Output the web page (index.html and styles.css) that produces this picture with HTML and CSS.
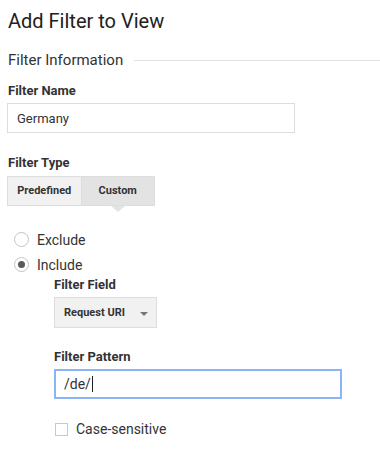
FILE: index.html
```html
<!DOCTYPE html>
<html>
	<head>
		<meta charset="UTF-8" />
		<title>Add Filter to View</title>
		<link rel="stylesheet" href="styles.css">
	</head>
	<body>
		<div class="page">
			<h1 class="title">Add Filter to View</h1>
			<div class="section-head">
				<span>Filter Information</span>
				<div class="rule"></div>
			</div>

			<label class="field-label">Filter Name</label>
			<input class="text-input name-input" type="text" value="Germany" />

			<label class="field-label type-label">Filter Type</label>
			<div class="toggle">
				<span class="toggle-btn">Predefined</span>
				<span class="toggle-btn active">Custom</span>
			</div>

			<div class="radios">
				<div class="radio-row">
					<span class="radio"></span>
					<span>Exclude</span>
				</div>
				<div class="radio-row">
					<span class="radio checked"></span>
					<span>Include</span>
				</div>
			</div>

			<div class="sub">
				<label class="field-label">Filter Field</label>
				<div class="dropdown">
					<span>Request URI</span>
					<span class="caret"></span>
				</div>

				<label class="field-label pattern-label">Filter Pattern</label>
				<div class="text-input pattern-input">/de/<span class="cursor"></span></div>

				<div class="check-row">
					<span class="checkbox"></span>
					<span>Case-sensitive</span>
				</div>
			</div>
		</div>
	</body>
</html>
```

FILE: styles.css
```css
* {
	margin: 0;
	padding: 0;
	box-sizing: border-box;
}
body {
	font-family: Roboto, "Liberation Sans", sans-serif;
	color: #222;
	background: #fff;
}
.page {
	padding: 9px 0 0 8px;
}
.title {
	font-size: 20px;
	font-weight: 400;
	line-height: 24px;
	color: #212121;
}
.section-head {
	display: flex;
	align-items: center;
	gap: 11px;
	margin-top: 18px;
	font-size: 15px;
	line-height: 18px;
	color: #333;
}
.section-head .rule {
	flex: 1;
	height: 1px;
	background: #e0e0e0;
	margin-top: 1px;
}
.field-label {
	display: block;
	font-size: 13px;
	font-weight: 700;
	line-height: 16px;
	color: #333;
	margin-top: 14px;
}
.text-input {
	display: block;
	font-family: inherit;
	font-size: 13px;
	color: #333;
	border: 1px solid #ddd;
	background: #fff;
	outline: none;
}
.name-input {
	width: 288px;
	height: 30px;
	margin: 4px 0 0 -1px;
	padding: 0 9px;
}
.type-label {
	margin-top: 22px;
}
.toggle {
	display: flex;
	width: 148px;
	margin: 5px 0 0 -1px;
	border: 1px solid #ddd;
	position: relative;
}
.toggle-btn {
	flex: 1;
	height: 28px;
	line-height: 28px;
	text-align: center;
	font-size: 11px;
	font-weight: 700;
	color: #333;
	background: #f1f1f1;
}
.toggle-btn + .toggle-btn {
	border-left: 1px solid #ddd;
}
.toggle-btn.active {
	background: #e3e3e3;
	position: relative;
}
.toggle-btn.active:after {
	content: '';
	position: absolute;
	left: 50%;
	bottom: -7px;
	margin-left: -7px;
	border-left: 7px solid transparent;
	border-right: 7px solid transparent;
	border-top: 6px solid #e3e3e3;
}
.radios {
	margin-top: 21px;
	padding-left: 6px;
}
.radio-row {
	display: flex;
	align-items: center;
	gap: 8px;
	height: 25px;
	font-size: 14px;
	color: #333;
}
.radio {
	width: 15px;
	height: 15px;
	border: 1px solid #c4c4c4;
	border-radius: 50%;
	display: flex;
	align-items: center;
	justify-content: center;
}
.radio.checked:after {
	content: '';
	width: 7px;
	height: 7px;
	border-radius: 50%;
	background: #5a5a5a;
}
.sub {
	padding-left: 46px;
}
.sub .field-label:first-child {
	margin-top: 0;
}
.dropdown {
	display: flex;
	align-items: center;
	justify-content: space-between;
	width: 103px;
	height: 31px;
	margin-top: 4px;
	padding: 0 8px 0 9px;
	border: 1px solid #ddd;
	background: #f1f1f1;
	font-size: 11px;
	font-weight: 700;
	color: #333;
}
.caret {
	border-left: 4px solid transparent;
	border-right: 4px solid transparent;
	border-top: 4px solid #777;
	margin-top: 2px;
}
.pattern-label {
	margin-top: 21px;
}
.pattern-input {
	width: 288px;
	height: 30px;
	margin-top: 4px;
	padding: 0 8px;
	line-height: 28px;
	border: 2px solid #8ab4f8;
	font-size: 14px;
	display: flex;
	align-items: center;
}
.cursor {
	display: inline-block;
	width: 1px;
	height: 16px;
	background: #222;
	margin-left: 1px;
}
.check-row {
	display: flex;
	align-items: center;
	gap: 8px;
	margin-top: 22px;
	padding-left: 1px;
	font-size: 14px;
	color: #333;
}
.checkbox {
	width: 13px;
	height: 13px;
	border: 1px solid #c8c8c8;
	background: #fff;
}
```
